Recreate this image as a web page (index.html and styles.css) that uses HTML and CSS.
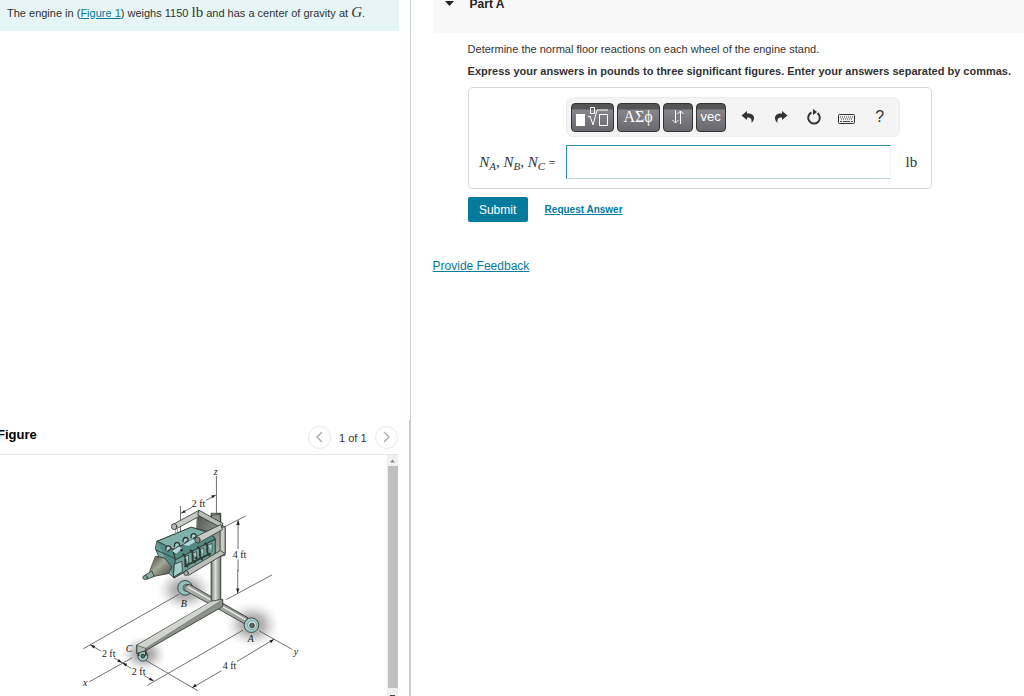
FILE: index.html
```html
<!DOCTYPE html>
<html lang="en">
<head>
<meta charset="utf-8">
<title>Engine stand – Part A</title>
<link rel="stylesheet" href="styles.css">
</head>
<body>
<div class="page">
  <aside class="side">
    <p class="problem">The engine in (<a href="#figure">Figure 1</a>) weighs 1150 <span class="math">lb</span> and has a center of gravity at <i class="math">G</i>.</p>
    <section class="figure" id="figure">
      <header class="figure-head">
        <h2>Figure</h2>
        <nav class="pager">
          <button type="button" class="round" aria-label="Previous figure"><svg width="22" height="22" viewBox="0 0 22 22"><path d="M13 6 8 11l5 5" fill="none" stroke="#aaa" stroke-width="1.4"/></svg></button>
          <span>1 of 1</span>
          <button type="button" class="round" aria-label="Next figure"><svg width="22" height="22" viewBox="0 0 22 22"><path d="m9 6 5 5-5 5" fill="none" stroke="#aaa" stroke-width="1.4"/></svg></button>
        </nav>
      </header>
      <div class="figure-body">
        <svg class="drawing" viewBox="0 455 387 241" preserveAspectRatio="xMinYMin meet" role="img" aria-label="Engine on a three-wheeled stand">
          <defs>
            <radialGradient id="shade"><stop offset="0" stop-color="#8d8d8d"/><stop offset=".45" stop-color="#b0b0b0" stop-opacity=".85"/><stop offset="1" stop-color="#ddd" stop-opacity="0"/></radialGradient>
            <linearGradient id="post"><stop offset="0" stop-color="#727b74"/><stop offset=".45" stop-color="#dde0dc"/><stop offset="1" stop-color="#727972"/></linearGradient>
            <linearGradient id="beam" x1="0" y1="1" x2="1" y2="0"><stop offset="0" stop-color="#8f958f"/><stop offset=".3" stop-color="#ced1cb"/><stop offset=".6" stop-color="#858b84"/><stop offset="1" stop-color="#b6bab3"/></linearGradient>
            <linearGradient id="cone" x1="0" y1="0" x2="1" y2="1"><stop offset="0" stop-color="#414740"/><stop offset=".45" stop-color="#a3a797"/><stop offset="1" stop-color="#3c4038"/></linearGradient>
            <linearGradient id="plate" x1="0" y1="0" x2="1" y2="1"><stop offset="0" stop-color="#4e534d"/><stop offset="1" stop-color="#bcc0ba"/></linearGradient>
            <linearGradient id="block" x1="0" y1="0" x2="1" y2="1"><stop offset="0" stop-color="#4b7f78"/><stop offset=".5" stop-color="#8fbcb6"/><stop offset="1" stop-color="#417069"/></linearGradient>
          </defs>

          <g transform="translate(70 570) scale(.33333)">
            <ellipse cx="345" cy="60" rx="84" ry="64" fill="url(#shade)"/>
            <ellipse cx="548" cy="165" rx="82" ry="68" fill="url(#shade)"/>
            <ellipse cx="222" cy="252" rx="68" ry="54" fill="url(#shade)"/>
            <g fill="none" stroke="#555" stroke-width="2.5">
              <path d="M40 237 328 73M58 336 187 264M232 347 520 181M225 270 384 363M470 89 607 15M568 183 668 239"/>
              <path d="M61 225 94 244M132 264 157 279 184 296M222 317 252 334M367 354 455 303M502 275 613 208M504 0V70"/>
            </g>
            <path d="m61 225 15 3-5 8zM157 279l-15-3 5-8zM157 279l15 3-5 8zM252 334l-15-3 5-8zM367 354l9-12 5 8zM613 208l-9 12-5-8zM504 70l-5-14h10z" fill="#222"/>
            <g stroke="#333" stroke-width="2.5" stroke-linejoin="round">
              <circle cx="346" cy="54" r="22" fill="#8fc0be"/><circle cx="351" cy="54" r="11" fill="#e0eeec"/>
              <path d="m345 49 14-6 176 101-8 19-182-102z" fill="url(#beam)"/>
              <path d="m354 51 174 99" stroke="#e4e6e2" stroke-width="5"/>
              <path d="M424-170h29V100l-29 5z" fill="url(#post)"/>
              <circle cx="219" cy="259" r="15" fill="#9dcdca"/><circle cx="219" cy="259" r="6" fill="#4b6c68"/>
              <path d="M206 247v12M228 244v14" stroke-width="5"/>
              <path d="m201 226 226-132 32-6v22L228 242l-27 9z" fill="#8b918b"/>
              <path d="m201 226 27 9v7l-27 9z" fill="#b6bab4"/>
              <path d="m201 226 222-131 36-6-231 146z" fill="#d0d3ce" stroke-width="1"/>
              <circle cx="545" cy="166" r="22" fill="#9bcac7"/><circle cx="547" cy="166" r="13" fill="#d2e7e4" stroke-width="1"/><circle cx="547" cy="167" r="7" fill="#53645f"/>
            </g>
          </g>

          <g transform="translate(130 460) scale(.33333)">
            <g fill="none" stroke="#555" stroke-width="2.5">
              <path d="M260 48V166M152 138V228M154 160 188 141M229 121 258 105M276 205 348 168M325 181V267M325 299V335"/>
            </g>
            <path d="m154 160 9-10 5 8zM258 105l-9 10-5-8zM325 181l-5 14h10z" fill="#222"/>
            <g stroke="#303834" stroke-width="2.5" stroke-linejoin="round" stroke-linecap="round">
              <path d="M246 166 270 162 273 188 246 192z" fill="#8d938d"/>
              <path d="m204 158 82 43v79l-35 18-52-24z" fill="url(#plate)"/>
              <path d="m272 204 14-4v86l-14 4z" fill="#c8ccc5"/>
              <path d="M82 244 184 202l56 14 16 20v50l-123 68-33-28-23-60z" fill="url(#block)"/>
              <path d="m82 244 102-42 55 17-109 49z" fill="#80b1aa"/>
              <path d="m130 268 109-49 17 18-119 63zM82 244l48 24 7 32-4 54M78 270l54 24" fill="#538a83"/>
              <path d="m137 300 119-61v44l-122 70z" fill="#6fa29b"/>
              <path d="m134 313 22-9 2 31-26 16z" fill="#a4cfca"/>
              <path d="M108 270c-2-17 17-14 15-4-2 7-9 3-9 9M134 260c-2-17 17-14 15-4-2 7-9 3-9 9M160 245c-2-17 17-14 15-4-2 7-9 3-9 9M184 233c-2-17 17-14 15-4-2 7-9 3-9 9" fill="#a7cfca" stroke-width="4"/>
              <path d="M126 273l21-14 12 6-19 17zM158 255l31-18 18 4-31 18z" fill="#b3d8de" stroke-width="1"/>
              <path d="M160 284c16 5-3 29 13 36M182 272c16 5-3 29 13 36M204 262c16 5-3 29 13 36M226 250c16 5-3 29 13 36M166 319l75-38" fill="none" stroke-width="6"/>
              <path d="m166 291 10-6v25M190 280l10-5v25M212 269l10-5v24M235 256l12-6v24" fill="#a8cfca" stroke-width="2"/>
              <path d="m78 289 26 5 22 27-10 20-52 10-4-16z" fill="url(#cone)"/>
              <path d="m65 334-20 12 7 12 20-8z" fill="#92aaa4"/><ellipse cx="46" cy="353" rx="7" ry="6" fill="#7bada7"/>
              <path d="m132 192 76-41 8 14-79 43z" fill="#c7cac4"/><ellipse cx="133" cy="200" rx="8" ry="9" fill="#b6bab2"/>
              <path d="m208 151 72 40-7 12-68-37z" fill="#b7bcb5"/>
              <path d="m199 230 74-36 5 15-71 40z" fill="#c7cac4"/><ellipse cx="203" cy="240" rx="8" ry="9" fill="#858c85"/>
              <path d="m164 335 108-63 14 9-109 65z" fill="#bbc0ba"/><ellipse cx="169" cy="340" rx="7" ry="7" fill="#a8ada5"/>
              <path d="M137 207v18M143 207v14" stroke="#777" stroke-width="2"/>
              <circle cx="155" cy="271" r="3" fill="#111"/><circle cx="199" cy="294" r="3" fill="#111"/>
            </g>
          </g>

          <g class="labels">
            <text x="192" y="507">2 ft</text><text x="233" y="558">4 ft</text>
            <text x="102" y="657">2 ft</text><text x="132" y="675">2 ft</text><text x="223" y="669">4 ft</text>
            <g class="vars"><text x="214" y="475">z</text><text x="181" y="607">B</text><text x="248" y="642">A</text><text x="126" y="652">C</text><text x="83" y="686">x</text><text x="294" y="655">y</text></g>
          </g>
        </svg>
        <div class="scroll" aria-hidden="true">
          <svg width="11" height="11" viewBox="0 0 11 11"><path d="M3 7.500h5L5.500 4.500z" fill="#888"/></svg>
          <span class="thumb"></span>
          <svg width="11" height="8" viewBox="0 0 11 8"><path d="M3 7h5v1H3z" fill="#444"/></svg>
        </div>
      </div>
    </section>
  </aside>

  <main class="main">
    <header class="part-head"><svg width="9" height="6" viewBox="0 0 9 6"><path d="M0 0h9L4.500 5z" fill="#222"/></svg><h1>Part A</h1></header>
    <div class="part">
      <p>Determine the normal floor reactions on each wheel of the engine stand.</p>
      <p class="instruct">Express your answers in pounds to three significant figures. Enter your answers separated by commas.</p>
      <form class="answer" id="answer">
        <div class="toolbar">
          <button type="button" class="key wide" aria-label="Templates"><svg width="34" height="20" viewBox="0 0 34 20"><path d="M1 7h9v12H1z" fill="#fff"/><path d="M15.500.500h4v6h-4zM13 10l2-1 3 9 4-15h11M24.500 7.500h8v11h-8z" fill="none" stroke="#fff"/></svg></button>
          <button type="button" class="key wide greek">ΑΣϕ</button>
          <button type="button" class="key" aria-label="Subscripts"><svg width="14" height="16" viewBox="0 0 14 16"><path d="M4.500 1v13M1.500 11l3 3 3-3M9.500 15V2M6.500 5l3-3 3 3" fill="none" stroke="#fff"/></svg></button>
          <button type="button" class="key vec">vec</button>
          <button type="button" class="tool" aria-label="Undo"><svg width="14" height="14" viewBox="0 0 14 14"><path d="M6 1 .5 5.500 6 10V7.500c4-.5 5 1.500 4.500 5.500C15 9 13.500 3 6 3.500z" fill="#333"/></svg></button>
          <button type="button" class="tool" aria-label="Redo"><svg width="14" height="14" viewBox="0 0 14 14"><path d="m8 1 5.500 4.500L8 10V7.500c-4-.5-5 1.500-4.500 5.500C-1 9 .500 3 8 3.500z" fill="#333"/></svg></button>
          <button type="button" class="tool" aria-label="Reset"><svg width="16" height="18" viewBox="0 0 16 18"><path d="M5.500 4.500a5.800 5.800 0 1 0 6 .6" fill="none" stroke="#333" stroke-width="2"/><path d="M7 1v6l4-3z" fill="#333"/></svg></button>
          <button type="button" class="tool keys" aria-label="Keyboard"><svg width="17" height="12" viewBox="0 0 17 12"><rect x=".5" y="1.500" width="16" height="9" rx="1" fill="#eee" stroke="#333"/><path d="M2 4h13M3 6h12" stroke="#444" stroke-dasharray="1 1"/><path d="M2 8.500h2m1 0h7m1 0h2" stroke="#444"/></svg></button>
          <button type="button" class="tool help" aria-label="Help">?</button>
        </div>
        <label class="math" for="ans"><i>N<sub>A</sub></i>, <i>N<sub>B</sub></i>, <i>N<sub>C</sub></i> <span class="eq">=</span></label>
        <input id="ans" type="text">
        <span class="math unit">lb</span>
      </form>
      <div class="actions"><button type="submit" form="answer" class="submit">Submit</button><a href="#request">Request Answer</a></div>
    </div>
    <a class="feedback" href="#feedback">Provide Feedback</a>
  </main>
</div>
</body>
</html>
```

FILE: styles.css
```css
* { box-sizing: border-box; }
body { margin: 0; font: 11px/16px "Liberation Sans", Arial, sans-serif; color: #333; background: #fff; overflow: hidden; }
p, h1, h2 { margin: 0; }
button { font: inherit; padding: 0; margin: 0; }
a { color: #047a9c; text-underline-offset: 1px; }
svg { display: block; flex: none; }
.math { font-family: "Liberation Serif", "Times New Roman", serif; font-size: 15px; line-height: 16px; color: #333; }

.page { display: grid; grid-template-columns: calc(40% + 1px) 1fr; height: 100vh; }
.side { display: flex; flex-direction: column; justify-content: space-between; min-width: 0; overflow: hidden; border-right: 1px solid #c6d3e2; }
.problem { background: #e6f6f6; margin-right: 11px; padding: 4px 7px 10px; line-height: 16px; white-space: nowrap; }
.figure { border-right: 1px solid #b5c8dc; }
.figure-head { display: flex; justify-content: space-between; align-items: center; height: 35px; margin-right: 11px; border-bottom: 1px solid #e4e4e4; }
.figure-head h2 { margin-left: -3px; padding-bottom: 5px; font-size: 13px; color: #000; }
.pager { display: flex; align-items: center; gap: 8px; }
.pager span { padding-top: 2px; }
.round { width: 23px; height: 23px; border: 1px solid #e9e9e9; border-radius: 50%; background: #fff; display: flex; align-items: center; justify-content: center; }
.figure-body { display: flex; margin-right: 11px; }
.drawing { flex: 1; min-width: 0; height: 241px; overflow: hidden; }
.labels { font: 10px "Liberation Serif", serif; fill: #222; }
.vars { font-style: italic; }
.scroll { display: flex; flex-direction: column; flex: none; width: 11px; background: #f0f0f0; }
.thumb { flex: 1; margin: 0 0 0 1px; background: #c0c0c0; }

.main { padding-left: 22px; min-width: 0; }
.part-head { display: flex; align-items: flex-start; gap: 16px; height: 33px; padding-left: 12px; background: #f8f8f8; }
.part-head h1 { font-size: 12px; line-height: 8px; color: #222; }
.part-head svg { margin-top: 1px; }
.part { padding: 8px 0 0 35px; }
.part p { white-space: nowrap; margin-bottom: 6px; }
.part .instruct { font-weight: bold; margin-bottom: 8px; }
.answer { display: grid; grid-template-columns: 87px 325px auto; column-gap: 10px; row-gap: 8px; align-items: center; max-width: 464px; height: 102px; padding: 0 0 9px; align-content: end; border: 1px solid #d8d8d8; border-radius: 5px; }
.toolbar { grid-column: 2 / 4; display: flex; align-items: center; gap: 3px; width: 334px; height: 40px; padding: 0 4px; border: 1px solid #ececec; border-radius: 7px; background: #f4f4f4; }
.key { display: flex; align-items: center; justify-content: center; flex: none; width: 30px; height: 29px; border: 1px solid #333; border-radius: 4px; color: #fff; background: linear-gradient(#555 0 5px, #85858c 6px, #68686d); }
.wide { width: 43px; }
.greek { font: 16px "Liberation Serif", serif; }
.vec { font-size: 13px; }
.tool { display: flex; align-items: center; justify-content: center; flex: none; width: 30px; height: 29px; border: 0; background: none; color: #333; }
.key + .tool { margin-left: 4px; }
.keys { padding-top: 3px; }
.help { font-size: 16px; }
.answer label { text-align: right; white-space: nowrap; }
.answer sub { font-size: 11px; line-height: 0; vertical-align: -3px; }
.eq { font-size: 12px; }
.answer input { width: 100%; height: 34px; border: 1px solid #2c8daa; border-bottom-color: #b9d5df; border-right-color: #f2f2f2; font: inherit; }
.unit { padding-left: 5px; }
.actions { display: flex; align-items: center; gap: 17px; margin-top: 8px; }
.actions a { font-weight: bold; font-size: 10px; }
.submit { width: 60px; height: 25px; border: 0; border-radius: 2px; background: #047a9c; color: #fff; font-size: 12px; }
.feedback { display: inline-block; margin-top: 36px; font-size: 12px; }
```
